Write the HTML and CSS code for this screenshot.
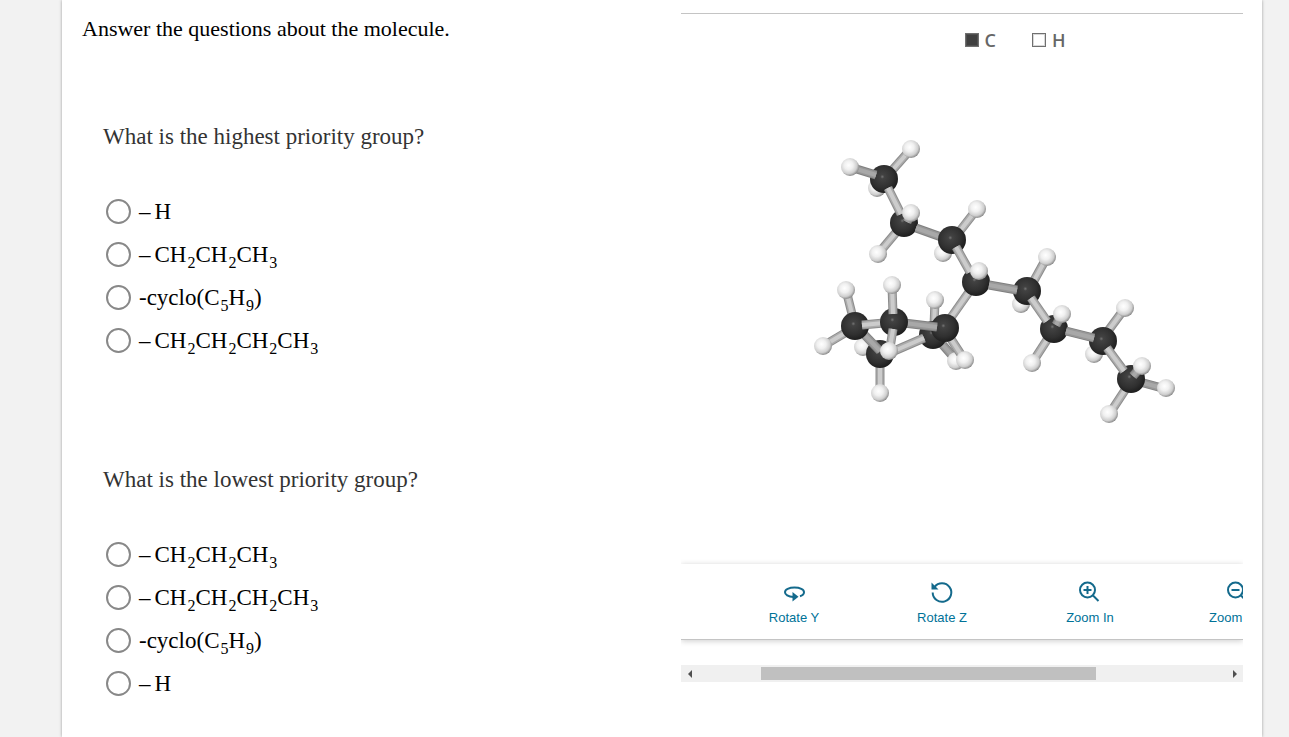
FILE: index.html
```html
<!DOCTYPE html>
<html lang="en">
<head>
  <meta charset="UTF-8" />
  <meta name="viewport" content="width=device-width, initial-scale=1" />
  <title>Molecule question</title>
  <link rel="stylesheet" href="styles.css">
</head>
<body>
  <main class="card">
    <section class="questions">
      <h1>Answer the questions about the molecule.</h1>

      <fieldset class="question">
        <legend>What is the highest priority group?</legend>
        <label class="option"><input type="radio" name="highest"><span><i class="dash">–</i>H</span></label>
        <label class="option"><input type="radio" name="highest"><span><i class="dash">–</i>CH<sub>2</sub>CH<sub>2</sub>CH<sub>3</sub></span></label>
        <label class="option"><input type="radio" name="highest"><span>-cyclo(C<sub>5</sub>H<sub>9</sub>)</span></label>
        <label class="option"><input type="radio" name="highest"><span><i class="dash">–</i>CH<sub>2</sub>CH<sub>2</sub>CH<sub>2</sub>CH<sub>3</sub></span></label>
      </fieldset>

      <fieldset class="question">
        <legend>What is the lowest priority group?</legend>
        <label class="option"><input type="radio" name="lowest"><span><i class="dash">–</i>CH<sub>2</sub>CH<sub>2</sub>CH<sub>3</sub></span></label>
        <label class="option"><input type="radio" name="lowest"><span><i class="dash">–</i>CH<sub>2</sub>CH<sub>2</sub>CH<sub>2</sub>CH<sub>3</sub></span></label>
        <label class="option"><input type="radio" name="lowest"><span>-cyclo(C<sub>5</sub>H<sub>9</sub>)</span></label>
        <label class="option"><input type="radio" name="lowest"><span><i class="dash">–</i>H</span></label>
      </fieldset>
    </section>

    <section class="viewer">
      <div class="viewer-content">
        <div class="legend">
          <span class="legend-item"><i class="swatch carbon"></i>C</span>
          <span class="legend-item"><i class="swatch"></i>H</span>
        </div>

        <svg class="molecule" id="molecule" viewBox="681 64 562 500" role="img" aria-label="Ball and stick model">
          <defs>
            <radialGradient id="gradC" cx="0.44" cy="0.42" r="0.6">
              <stop offset="0" stop-color="#747474" />
              <stop offset="0.12" stop-color="#424242" />
              <stop offset="0.65" stop-color="#303030" />
              <stop offset="1" stop-color="#1c1c1c" />
            </radialGradient>
            <radialGradient id="gradH" cx="0.42" cy="0.4" r="0.62">
              <stop offset="0" stop-color="#ffffff" />
              <stop offset="0.4" stop-color="#f0f0f0" />
              <stop offset="0.75" stop-color="#cfcfcf" />
              <stop offset="1" stop-color="#858585" />
            </radialGradient>
          </defs>
        </svg>

        <div class="toolbar">
          <button type="button" class="tool">
            <svg viewBox="0 0 24 24"><path d="M11.500 17C6 17 3 14.500 3 12.200C3 9.600 7 7.600 12.500 7.600S22 9.600 22 12.200C22 14 20.500 15.400 18 16.200" /><path class="solid" d="M10.500 12L16.500 16.700L10.500 21.500Z" /></svg>
            Rotate Y
          </button>
          <button type="button" class="tool">
            <svg viewBox="0 0 24 24"><path d="M4.500 7A9.300 9.300 0 1 1 2.700 12.500" /><path class="solid" d="M1.500 2.500V9.500H8.500Z" /></svg>
            Rotate Z
          </button>
          <button type="button" class="tool">
            <svg viewBox="0 0 24 24"><circle cx="9.500" cy="10" r="7.500" /><path d="M5.500 10H13.500M9.500 6V14M15 15.500L20.500 21" /></svg>
            Zoom In
          </button>
          <button type="button" class="tool">
            <svg viewBox="0 0 24 24"><circle cx="9.500" cy="10" r="7.500" /><path d="M5.500 10H13.500M15 15.500L20.500 21" /></svg>
            Zoom Out
          </button>
        </div>
      </div>

      <div class="scrollbar">
        <button type="button" class="arrow left" aria-label="Scroll left"></button>
        <div class="track"><div class="thumb"></div></div>
        <button type="button" class="arrow right" aria-label="Scroll right"></button>
      </div>
    </section>
  </main>

  <script src="molecule.js"></script>
</body>
</html>
```

FILE: styles.css
```css
* {
  box-sizing: border-box;
}
body {
  margin: 0;
  background: #f2f2f2;
  font-family: "Liberation Serif", "Times New Roman", serif;
  font-size: 23px;
  color: #000;
}
.card {
  display: grid;
  grid-template-columns: 1fr 1fr;
  gap: 37px;
  min-height: 100vh;
  margin: 0 27px 0 62px;
  padding: 13px 19px 0 20px;
  background: #fff;
  box-shadow: 0 0 3px rgba(0, 0, 0, 0.35);
}
h1 {
  margin: 0;
  font-size: 22px;
  font-weight: normal;
  line-height: 32px;
}
.question {
  margin: 0 0 0 21px;
  padding: 0;
  border: 0;
}
h1 + .question {
  margin-top: 76px;
  margin-bottom: 102px;
}
.question legend {
  margin-bottom: 37px;
  padding: 0;
  line-height: 32px;
  color: #333;
}
.option {
  display: flex;
  align-items: center;
  gap: 8px;
  height: 43px;
  padding-left: 3px;
}
.option input {
  appearance: none;
  width: 25px;
  height: 25px;
  margin: 0;
  border: 2px solid #888;
  border-radius: 50%;
  background: #fff;
}
.option input:checked {
  background: #888;
  box-shadow: inset 0 0 0 4px #fff;
}
.option sub {
  margin-left: 1px;
  font-size: 16px;
  line-height: 0;
  vertical-align: -6px;
}
.dash {
  margin-right: 4px;
  font-style: normal;
}

.viewer {
  min-width: 0;
}
.viewer-content {
  overflow: hidden;
  padding-bottom: 25px;
  border-top: 1px solid #c4c4c4;
}
.legend {
  display: flex;
  justify-content: center;
  gap: 36px;
  height: 50px;
  padding: 13px 0 0 106px;
  font-family: "Open Sans", sans-serif;
  font-size: 18px;
  font-weight: 600;
  line-height: 26px;
  color: #666;
}
.legend-item {
  display: flex;
  align-items: center;
  gap: 6px;
  height: 26px;
}
.swatch {
  width: 14px;
  height: 14px;
  border: 1px solid #707070;
  box-shadow: inset 0 0 0 1px #d8d8d8;
}
.swatch.carbon {
  background: #404040;
  box-shadow: inset 0 0 0 1px #505050;
}
.molecule {
  display: block;
  width: 100%;
}
.edge {
  stroke: #8c8c8c;
  stroke-width: 9;
}
.body {
  stroke: #acacac;
  stroke-width: 7;
}
.shine {
  stroke: #cccccc;
  stroke-width: 4;
}
.dim .shine {
  stroke: #a8a8a8;
}
.dim .body {
  stroke: #979797;
}
.dim .edge {
  stroke: #808080;
}

.toolbar {
  position: relative;
  display: flex;
  height: 76px;
  padding-left: 39px;
  border-bottom: 1px solid #c4c4c4;
  background: #fff;
  box-shadow: 0 1px 6px rgba(0, 0, 0, 0.2);
}
.tool {
  display: flex;
  flex: 0 0 148px;
  flex-direction: column;
  align-items: center;
  gap: 6px;
  padding: 16px 0 0;
  border: 0;
  background: none;
  font-family: "Liberation Sans", Arial, sans-serif;
  font-size: 13px;
  line-height: 16px;
  color: #007298;
  cursor: pointer;
}
.tool svg {
  width: 24px;
  height: 24px;
  fill: none;
  stroke: #146a8c;
  stroke-width: 2;
}
.tool .solid {
  fill: #146a8c;
  stroke: none;
}

.scrollbar {
  display: flex;
  height: 17px;
  background: #f0f0f0;
}
.track {
  flex: 1;
  padding: 2px 0;
}
.thumb {
  width: 63.4%;
  height: 13px;
  margin-left: 12%;
  background: #c0c0c0;
}
.arrow {
  display: flex;
  align-items: center;
  justify-content: center;
  width: 17px;
  padding: 0;
  border: 0;
  background: none;
}
.arrow::before {
  content: "";
  border: 4px solid transparent;
}
.arrow.left::before {
  border-left: 0;
  border-right-color: #505050;
}
.arrow.right::before {
  border-right: 0;
  border-left-color: #505050;
}
```

FILE: molecule.js
```javascript
// Atoms and bonds, back to front.
// H / C: [type, x, y]    bond: [type, x1, y1, x2, y2], D is a darker one
const shapes = [
  // upper chain
  ['H', 877, 188],
  ['B', 888, 175, 911, 149],
  ['H', 911, 149],
  ['C', 884, 179],
  ['D', 876, 175, 850, 167],
  ['H', 850, 167],
  ['B', 904, 223, 878, 254],
  ['H', 878, 254],
  ['H', 943, 253],
  ['C', 904, 223],
  ['B', 888, 188, 901, 214],
  ['D', 907, 222, 911, 214],
  ['D', 916, 228, 944, 238],
  ['H', 911, 213],
  ['B', 956, 236, 977, 209],
  ['H', 977, 209],
  ['C', 952, 240],

  // middle carbon
  ['B', 945, 326, 976, 282],
  ['C', 976, 282],
  ['B', 956, 247, 970, 272],
  ['H', 979, 271],
  ['B', 1031, 286, 1047, 257],
  ['H', 1047, 257],
  ['H', 1021, 304],
  ['C', 1027, 291],
  ['D', 989, 285, 1017, 290],

  // lower chain
  ['B', 1054, 329, 1032, 363],
  ['H', 1032, 363],
  ['H', 1094, 354],
  ['C', 1054, 329],
  ['B', 1031, 298, 1047, 321],
  ['D', 1056, 325, 1061, 316],
  ['H', 1062, 314],
  ['B', 1105, 335, 1125, 308],
  ['H', 1125, 308],
  ['C', 1103, 341],
  ['D', 1066, 331, 1094, 338],
  ['D', 1140, 382, 1162, 388],
  ['H', 1166, 388],
  ['B', 1129, 384, 1110, 413],
  ['H', 1109, 414],
  ['C', 1131, 379],
  ['B', 1107, 348, 1124, 371],
  ['D', 1133, 376, 1139, 369],
  ['H', 1142, 366],

  // ring
  ['H', 863, 347],
  ['B', 934, 326, 935, 301],
  ['H', 935, 300],
  ['D', 935, 336, 956, 360],
  ['H', 956, 361],
  ['C', 933, 335],
  ['B', 880, 357, 880, 392],
  ['C', 880, 354],
  ['B', 894, 351, 924, 338],
  ['H', 880, 393],
  ['B', 949, 336, 964, 359],
  ['H', 965, 360],
  ['C', 945, 328],
  ['B', 854, 322, 846, 290],
  ['H', 846, 290],
  ['B', 850, 330, 823, 346],
  ['H', 823, 346],
  ['D', 858, 328, 880, 351],
  ['C', 855, 326],
  ['B', 862, 325, 884, 323],
  ['D', 904, 323, 937, 327],
  ['C', 894, 322],
  ['B', 893, 314, 892, 286],
  ['H', 892, 285],
  ['B', 893, 329, 890, 348],
  ['H', 889, 351],
];

const svg = document.getElementById('molecule');

function add(parent, name, attrs) {
  const el = document.createElementNS('http://www.w3.org/2000/svg', name);
  for (const key in attrs) el.setAttribute(key, attrs[key]);
  parent.appendChild(el);
  return el;
}

shapes.forEach(([type, x1, y1, x2, y2]) => {
  if (type === 'C' || type === 'H') {
    add(svg, 'circle', { cx: x1, cy: y1, r: type === 'C' ? 14 : 9, fill: `url(#grad${type})` });
    return;
  }
  const bond = add(svg, 'g', { class: type === 'D' ? 'dim' : 'lit' });
  ['edge', 'body', 'shine'].forEach(layer => {
    add(bond, 'line', { class: layer, x1, y1, x2, y2 });
  });
});
```
